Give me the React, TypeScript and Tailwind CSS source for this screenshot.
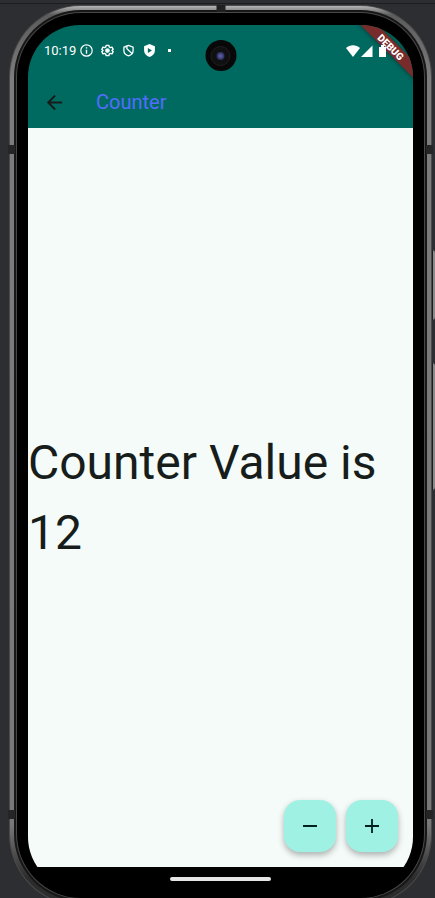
import { useState, type ReactNode } from "react";

function StatusIcons() {
  return (
    <div className="flex items-center gap-2" aria-hidden="true">
      <svg width="13" height="13" viewBox="0 0 13 13" fill="none" stroke="#fff">
        <circle cx="6.500" cy="6.500" r="5.700" strokeWidth="1.200" />
        <path d="M6.500 3.200v1.400M6.500 5.800v4" strokeWidth="1.400" />
      </svg>
      <svg width="13" height="13" viewBox="0 0 24 24" fill="none" stroke="#fff" strokeWidth="2.6" strokeLinejoin="round">
        <path d="M9.500 2.500h5l.8 3 2 1.200 3-.9 2.200 4-2.200 2.200 2.200 2.200-2.200 4-3-.9-2 1.200-.8 3h-5l-.8-3-2-1.200-3 .9-2.200-4L3.700 12 1.500 9.800l2.200-4 3 .9 2-1.200z" />
        <circle cx="12" cy="12" r="3" fill="#fff" />
      </svg>
      <svg width="13" height="13" viewBox="0 0 24 24" fill="none" stroke="#fff" strokeWidth="2.4">
        <path d="M12 2.500 20.500 6v6c0 5-3.500 8.500-8.500 10-5-1.500-8.500-5-8.500-10V6z" />
        <path d="M5 5.500 9 4v4.500l9.500 9" />
      </svg>
      <svg width="13" height="13" viewBox="0 0 24 24">
        <path fill="#fff" d="M12 0 2 4v8c0 6 4.200 10 10 12 5.800-2 10-6 10-12V4z" />
        <path fill="#006a60" d="m9 7.500 7.500 4.500L9 16.500z" />
      </svg>
      <span className="ml-1 size-[3px] bg-white" />
    </div>
  );
}

function SignalIcons() {
  return (
    <svg className="relative z-10" width="41" height="12" viewBox="0 0 41 12" fill="#fff" aria-hidden="true">
      <path d="M0 3C4-.8 10-.8 14 3L7 12z" />
      <path d="M15 12 26.500.5V12z" />
      <path d="M33 2h2V0h3v2h2v10h-7z" />
    </svg>
  );
}

function FloatingButton({ label, onClick, children }: { label: string; onClick: () => void; children: ReactNode }) {
  return (
    <button
      type="button"
      aria-label={label}
      onClick={onClick}
      className="flex size-[52px] items-center justify-center rounded-2xl bg-[#9ff2e3] shadow-[0_3px_6px_rgba(0,0,0,0.3)]"
    >
      <svg width="24" height="24" viewBox="0 0 24 24" stroke="#00201c" strokeWidth="1.800" fill="none">
        {children}
      </svg>
    </button>
  );
}

function Screen() {
  const [count, setCount] = useState(12);
  return (
    <div className="relative flex grow flex-col overflow-hidden rounded-[52px] bg-black">
      <header className="bg-[#006a60]">
        <div className="flex h-[51px] items-center justify-between pr-[26px] pl-4">
          <div className="flex items-center gap-1">
            <span className="text-[13px] text-white">10:19</span>
            <StatusIcons />
          </div>
          <SignalIcons />
        </div>
        <div className="flex h-[52px] items-center gap-[30px] pl-[15px]">
          <button type="button" aria-label="Back" className="flex size-[23px] items-center justify-center">
            <svg width="23" height="23" viewBox="0 0 24 24" fill="#171d1b">
              <path d="M20 11H7.830l5.590-5.590L12 4l-8 8 8 8 1.410-1.410L7.830 13H20z" />
            </svg>
          </button>
          <h1 className="text-xl text-[#536dfe]">Counter</h1>
        </div>
      </header>
      <main className="flex grow flex-col bg-[#f4fbf8]">
        <p className="flex grow items-center text-5xl leading-[70px] text-[#171d1b]">Counter Value is {count}</p>
      </main>
      <div className="absolute right-[15px] bottom-[37px] flex gap-[10px]">
        <FloatingButton label="Decrement" onClick={() => setCount(count - 1)}>
          <path d="M5 12h14" />
        </FloatingButton>
        <FloatingButton label="Increment" onClick={() => setCount(count + 1)}>
          <path d="M5 12h14M12 5v14" />
        </FloatingButton>
      </div>
      <div className="flex h-[22px] justify-center bg-black pt-[10px]">
        <span className="h-1 w-[101px] rounded-full bg-[#e6e6e6]" />
      </div>
      <div className="absolute top-4 -right-[28px] h-3 w-[100px] rotate-45 bg-[#782b2b] shadow-[0_0_5px_rgba(0,0,0,0.5)]" />
      <div className="absolute top-4 -right-[28px] z-20 flex h-3 w-[100px] rotate-45 items-center justify-center text-[10px] font-black text-white">
        DEBUG
      </div>
      <div className="absolute top-[15px] left-1/2 flex size-[31px] -translate-x-1/2 items-center justify-center rounded-full bg-[#080808]">
        <span className="flex size-5 items-center justify-center rounded-full border border-[#202020] bg-[#101012]">
          <span className="size-2 rounded-full bg-radial from-[#6a66b8] to-[#101830]" />
        </span>
      </div>
    </div>
  );
}

function FrameDetails() {
  return (
    <div aria-hidden="true">
      <span className="absolute top-0 left-1/2 h-[7px] w-[9px] -translate-x-1/2 bg-[#202020]" />
      <span className="absolute top-[140px] -left-px h-[9px] w-[7px] bg-[#252525]" />
      <span className="absolute top-[140px] -right-px h-[9px] w-[7px] bg-[#252525]" />
      <span className="absolute bottom-[87px] -left-px h-[9px] w-[7px] bg-[#252525]" />
      <span className="absolute bottom-[87px] -right-px h-[9px] w-[7px] bg-[#252525]" />
      <span className="absolute top-[245px] -right-[3px] h-[70px] w-[3px] rounded-r-sm border-l border-[#1c1c1c] bg-[#8a8a8a]" />
      <span className="absolute top-[358px] -right-[3px] h-[127px] w-[3px] rounded-r-sm border-l border-[#1c1c1c] bg-[#8a8a8a]" />
    </div>
  );
}

export default function App() {
  return (
    <div className="flex h-screen flex-col overflow-hidden bg-[#2d2e32] font-['Roboto',sans-serif]">
      <div className="h-1 shrink-0 border-b border-[#1c1d1f]" />
      <div className="relative mt-px mr-[3px] ml-[9px] flex h-[calc(100%+3px)] shrink-0 flex-col rounded-[72px] bg-[#4b4b4b] p-px">
        <div className="flex grow flex-col rounded-[71px] bg-[linear-gradient(#b4b4b4,#5c5c5c_1%,#7c7c7c_8%,#787878_91%,#2c2c2c_97%)] p-1">
          <div className="flex grow flex-col rounded-[67px] bg-[#171717] p-[2px]">
            <div className="flex grow flex-col rounded-[65px] bg-[#484848] p-px">
              <div className="flex grow flex-col rounded-[64px] bg-black px-[11px] pt-3 pb-[9px]">
                <Screen />
              </div>
            </div>
          </div>
        </div>
        <FrameDetails />
      </div>
    </div>
  );
}
